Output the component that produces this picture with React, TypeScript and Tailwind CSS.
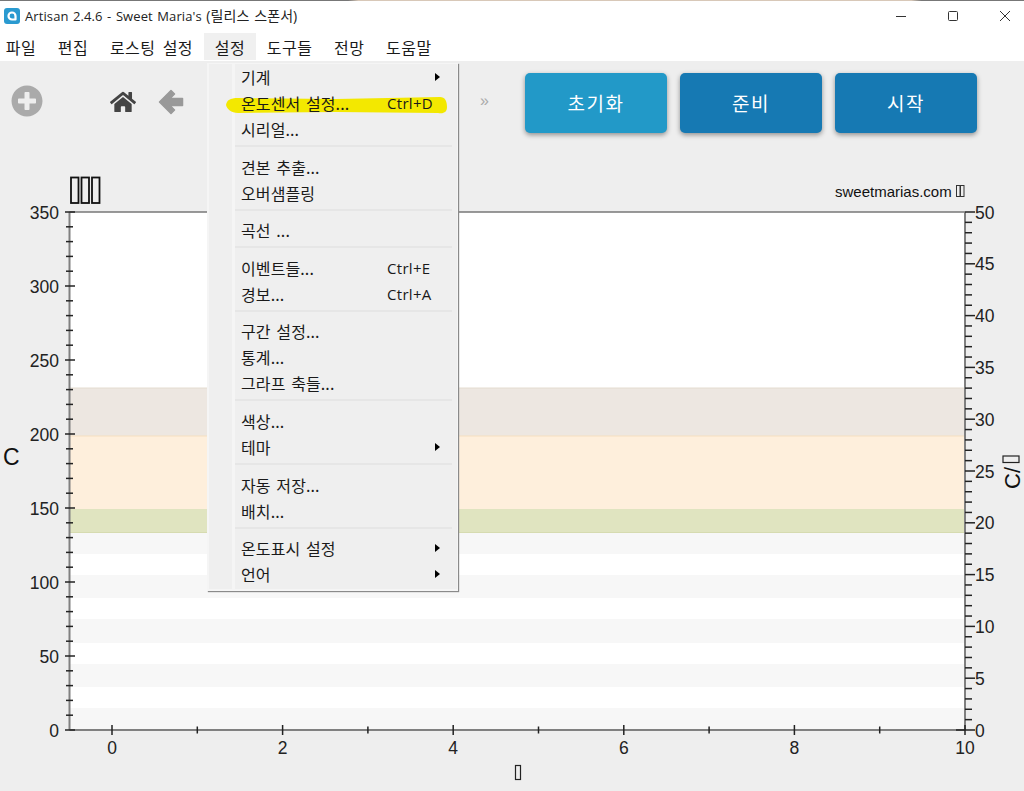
import { FaHome, FaPlusCircle } from "react-icons/fa";

const F = "'Liberation Sans', Arial, sans-serif";

const menuBar = ["파일", "편집", "로스팅 설정", "설정", "도구들", "전망", "도움말"];

type Row = { t: string; k?: string; sub?: boolean };
const groups: Row[][] = [
  [{ t: "기계", sub: true }, { t: "온도센서 설정...", k: "Ctrl+D" }, { t: "시리얼..." }],
  [{ t: "견본 추출..." }, { t: "오버샘플링" }],
  [{ t: "곡선 ..." }],
  [{ t: "이벤트들...", k: "Ctrl+E" }, { t: "경보...", k: "Ctrl+A" }],
  [{ t: "구간 설정..." }, { t: "통계..." }, { t: "그라프 축들..." }],
  [{ t: "색상..." }, { t: "테마", sub: true }],
  [{ t: "자동 저장..." }, { t: "배치..." }],
  [{ t: "온도표시 설정", sub: true }, { t: "언어", sub: true }],
];

function Menu() {
  return (
    <div className="absolute left-[207px] top-[63px] w-[251px] h-[528px] bg-[#f5f5f5] shadow-[1px_1px_1px_#8a8a8a] pl-[2px] pr-[1px] pt-[1px] flex">
      <div className="w-[23px] h-[525px] bg-[#efefef] shrink-0" />
      <div className="relative ml-[3px] flex-1 h-[525px] bg-[#efefef]">
        <svg className="absolute left-[-9px] top-[32px]" width="221" height="19" viewBox="0 0 221 19">
          <path d="M0 9 C1 4 4 2 12 2 L110 3 L214 1 C219 1 221 5 221 11 C221 16 218 18 212 17 L110 16 L12 17 C5 17 1 13 0 9 Z" fill="#f3e800" />
        </svg>
        {groups.map((g, i) => (
          <div key={i}>
            {i > 0 && <div className="h-[2px] mt-[3px] mb-[6.6px] mr-[5px] bg-[#e6e6e6]" />}
            {g.map((r) => (
              <div key={r.t} className="relative h-[26px] flex items-center pl-[6px] text-[16px] tracking-[0.1px] [word-spacing:2px] text-[#1a1a1a] whitespace-nowrap">
                <span>{r.t}</span>
                {r.k && (
                  <span className="absolute left-[152px] text-[15px] tracking-[0.3px]" style={{ fontFamily: "'Open Sans', sans-serif" }}>
                    {r.k}
                  </span>
                )}
                {r.sub && <span className="absolute left-[200px] w-0 h-0 border-y-[4px] border-y-transparent border-l-[5px] border-l-black" />}
              </div>
            ))}
          </div>
        ))}
      </div>
    </div>
  );
}

function Chart() {
  const O = 172;
  const top = 212 - O;
  const bot = 730 - O;
  const lx = 69.5;
  const rx = 965;
  const yL = (v: number) => bot - (v / 350) * (bot - top);
  const yR = (v: number) => bot - (v / 50) * (bot - top);
  const stripes = [
    [533, 554], [575, 598], [619, 643], [664, 687], [708, 730],
  ];
  const vals10 = Array.from({ length: 36 }, (_, i) => i * 10);
  const vals1 = Array.from({ length: 51 }, (_, i) => i);
  const xs = Array.from({ length: 11 }, (_, i) => 112 + i * 85.3);
  return (
    <svg width="1024" height="619" viewBox="0 0 1024 619" className="block" style={{ fontFamily: F }}>
      <rect x={lx} y={top} width={rx - lx} height={bot - top} fill="#ffffff" />
      {stripes.map(([a, b]) => (
        <rect key={a} x={lx} y={a - O} width={rx - lx} height={b - a} fill="#f7f7f7" />
      ))}
      <rect x={lx} y={388 - O} width={rx - lx} height={48} fill="#ede7e1" />
      <rect x={lx} y={436 - O} width={rx - lx} height={73} fill="#feefdc" />
      <rect x={lx} y={509 - O} width={rx - lx} height={24} fill="#e0e4c0" />
      <line x1={lx} x2={rx} y1={388 - O} y2={388 - O} stroke="#e4dcd0" />
      <line x1={lx} x2={rx} y1={436 - O} y2={436 - O} stroke="#f5dfbf" />
      <line x1={lx} x2={rx} y1={532.5 - O} y2={532.5 - O} stroke="#d6dbb0" />

      <line x1={lx} x2={rx} y1={top} y2={top} stroke="#777777" strokeWidth="1.5" />
      <line x1={lx} x2={rx} y1={bot} y2={bot} stroke="#808080" strokeWidth="2" />
      <line x1={lx} x2={lx} y1={top} y2={bot} stroke="#808080" strokeWidth="2" />
      <line x1={rx} x2={rx} y1={top} y2={bot} stroke="#808080" strokeWidth="2" />

      {vals10.map((v) => {
        const major = v % 50 === 0;
        return <line key={v} x1={major ? 65 : 66} x2={major ? 75 : 73} y1={yL(v)} y2={yL(v)} stroke="#222222" strokeWidth="1.5" />;
      })}
      {vals10.filter((v) => v % 50 === 0).map((v) => (
        <text key={v} x="59" y={yL(v) + 6.5} textAnchor="end" fontSize="17.5" fill="#222222">{v}</text>
      ))}
      {vals1.map((v) => {
        const major = v % 5 === 0;
        return <line key={v} x1={rx} x2={major ? 975 : 972} y1={yR(v)} y2={yR(v)} stroke="#222222" strokeWidth="1.5" />;
      })}
      <line x1="956" x2="965" y1={bot} y2={bot} stroke="#222222" strokeWidth="1.5" />
      {vals1.filter((v) => v % 5 === 0).map((v) => (
        <text key={v} x="975" y={yR(v) + 6.5} fontSize="17.5" fill="#222222">{v}</text>
      ))}
      {xs.map((x, i) => (
        <line key={i} x1={x} x2={x} y1={i % 2 === 0 ? bot - 5 : bot - 3.5} y2={i % 2 === 0 ? bot + 5 : bot + 3.5} stroke="#222222" strokeWidth="1.5" />
      ))}
      {xs.map((x, i) =>
        i % 2 === 0 ? (
          <text key={i} x={x} y={582} textAnchor="middle" fontSize="17.5" fill="#222222">{i}</text>
        ) : null,
      )}

      {/* missing-glyph boxes of the original title, as drawn by the app */}
      {[71, 81.5, 92].map((x) => (
        <rect key={x} x={x} y={5.5} width="7.5" height="25.5" fill="none" stroke="#111111" strokeWidth="1.8" />
      ))}
      <text x="835" y="25" fontSize="15" fill="#111111">sweetmarias.com</text>
      <rect x="956.5" y="13.5" width="3.5" height="11" fill="none" stroke="#333333" />
      <rect x="960.5" y="13.5" width="3.5" height="11" fill="none" stroke="#333333" />

      <text x="3" y="293" fontSize="23" fill="#111111">C</text>
      <text transform="translate(1020 317) rotate(-90)" fontSize="22" fill="#111111">C/</text>
      <rect x="1003" y="284" width="16" height="6.5" fill="none" stroke="#222222" strokeWidth="1.2" />
      <rect x="515.5" y="593.5" width="5" height="14" fill="none" stroke="#222222" strokeWidth="1.2" />
    </svg>
  );
}

function Btn({ label, color }: { label: string; color: string }) {
  return (
    <div className={`w-[142px] h-[60px] rounded-[5px] ${color} text-white text-[19px] tracking-[1.5px] flex items-center justify-center shadow-[0_2px_5px_rgba(0,0,0,0.4)]`}>
      {label}
    </div>
  );
}

export default function App() {
  return (
    <div
      className="relative w-[1024px] h-[791px] overflow-hidden bg-[#eeeeee]"
      style={{ fontFamily: "'Noto Sans CJK KR', sans-serif" }}
    >
      <div className="h-px bg-[linear-gradient(90deg,#777_0%,#777_34%,#d8c8b8_35%,#d8c8b8_89%,#777_90%,#777_100%)]" />
      <div className="h-[30px] bg-white flex items-center pl-[4px] relative">
        <svg width="16" height="16" viewBox="0 0 16 16" className="shrink-0">
          <rect width="16" height="16" rx="3" fill="#2a9ad0" />
          <path d="M11.5 8a3.5 3.5 0 1 0-3.5 3.5h3.5Z" fill="none" stroke="#fff" strokeWidth="2.2" strokeLinejoin="round" />
        </svg>
        <span className="ml-[5px] text-[13px] tracking-[0.1px] [word-spacing:1px] text-[#222]" style={{ fontFamily: "'Open Sans', 'Noto Sans CJK KR', sans-serif" }}>
          Artisan 2.4.6 - Sweet Maria's <span className="text-[14px]">(릴리스 스폰서)</span>
        </span>
        <div className="ml-auto flex items-center">
          <svg width="12" height="12" viewBox="0 0 12 12" className="mr-[40px]"><path d="M1 6.5h10" stroke="#333" strokeWidth="1" /></svg>
          <svg width="12" height="12" viewBox="0 0 12 12" className="mr-[40px]"><rect x="1.5" y="1.5" width="9" height="9" rx="1" fill="none" stroke="#333" /></svg>
          <svg width="12" height="12" viewBox="0 0 12 12" className="mr-[13px]"><path d="M1 1l10 10M11 1L1 11" stroke="#333" strokeWidth="1" /></svg>
        </div>
      </div>
      <div className="h-[30px] bg-white flex items-stretch ml-[-5px] text-[16px] tracking-[0.5px] [word-spacing:3px] text-[#1a1a1a]">
        {menuBar.map((m) => (
          <div key={m} className={`px-[10.8px] mt-[2px] mb-px flex items-center whitespace-nowrap ${m === "설정" ? "bg-[#f0f0f0]" : ""}`}>
            {m}
          </div>
        ))}
      </div>
      <div className="h-[111px] flex items-start relative">
        <FaPlusCircle className="ml-[11px] mt-[24px] text-[#aaaaaa] shrink-0" size={32} />
        <FaHome className="ml-[67px] mt-[28px] text-[#444444] shrink-0" size={26} />
        <svg width="28" height="28" viewBox="0 0 28 28" className="ml-[21px] mt-[27px] shrink-0">
          <path d="M2.5 14 L14 2.5 L17.5 6 L13 10.5 L25.5 10.5 L25.5 17.5 L13 17.5 L17.5 22 L14 25.5 Z" fill="#999999" stroke="#999999" strokeWidth="1.5" strokeLinejoin="round" />
        </svg>
        <span className="ml-[295px] mt-[30px] text-[16px] leading-[20px] text-[#aaaaaa]" style={{ fontFamily: F }}>»</span>
        <div className="ml-auto mr-[47px] mt-[12px] flex gap-[13px]">
          <Btn label="초기화" color="bg-[#2299c8]" />
          <Btn label="준비" color="bg-[#1679b3]" />
          <Btn label="시작" color="bg-[#1679b3]" />
        </div>
      </div>
      <Chart />
      <Menu />
    </div>
  );
}
